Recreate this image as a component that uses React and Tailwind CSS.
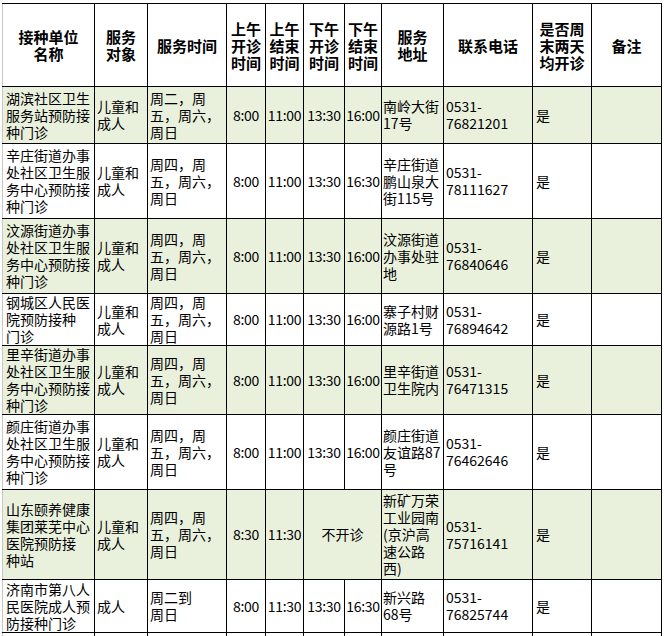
import React from 'react';

// 接种单位列表（绿色行 / 白色行交替）
const rows = [
  {
    h: 'h-[57px]', green: true,
    name: ['湖滨社区卫生', '服务站预防接', '种门诊'],
    who: ['儿童和', '成人'],
    days: ['周二，周', '五，周六，', '周日'],
    times: ['8:00', '11:00', '13:30', '16:00'],
    addr: ['南岭大街', '17号'],
    tel: '76821201',
  },
  {
    h: 'h-[75px]', green: false,
    name: ['辛庄街道办事', '处社区卫生服', '务中心预防接', '种门诊'],
    who: ['儿童和', '成人'],
    days: ['周四，周', '五，周六，', '周日'],
    times: ['8:00', '11:00', '13:30', '16:30'],
    addr: ['辛庄街道', '鹏山泉大', '街115号'],
    tel: '78111627',
  },
  {
    h: 'h-[75px]', green: true,
    name: ['汶源街道办事', '处社区卫生服', '务中心预防接', '种门诊'],
    who: ['儿童和', '成人'],
    days: ['周四，周', '五，周六，', '周日'],
    times: ['8:00', '11:00', '13:30', '16:00'],
    addr: ['汶源街道', '办事处驻', '地'],
    tel: '76840646',
  },
  {
    h: 'h-[52px]', green: false,
    name: ['钢城区人民医', '院预防接种', '门诊'],
    who: ['儿童和', '成人'],
    days: ['周四，周', '五，周六，', '周日'],
    times: ['8:00', '11:00', '13:30', '16:00'],
    addr: ['寨子村财', '源路1号'],
    tel: '76894642',
  },
  {
    h: 'h-[69px]', green: true,
    name: ['里辛街道办事', '处社区卫生服', '务中心预防接', '种门诊'],
    who: ['儿童和', '成人'],
    days: ['周四，周', '五，周六，', '周日'],
    times: ['8:00', '11:00', '13:30', '16:00'],
    addr: ['里辛街道', '卫生院内'],
    tel: '76471315',
  },
  {
    h: 'h-[75px]', green: false,
    name: ['颜庄街道办事', '处社区卫生服', '务中心预防接', '种门诊'],
    who: ['儿童和', '成人'],
    days: ['周四，周', '五，周六，', '周日'],
    times: ['8:00', '11:00', '13:30', '16:00'],
    addr: ['颜庄街道', '友谊路87', '号'],
    tel: '76462646',
  },
  {
    h: 'h-[90px]', green: true,
    name: ['山东颐养健康', '集团莱芜中心', '医院预防接', '种站'],
    who: ['儿童和', '成人'],
    days: ['周四，周', '五，周六，', '周日'],
    times: ['8:30', '11:30'],
    closed: '不开诊',
    addr: ['新矿万荣', '工业园南', '(京沪高', '速公路', '西)'],
    tel: '75716141',
  },
  {
    h: 'h-[53px]', green: false,
    name: ['济南市第八人', '民医院成人预', '防接种门诊'],
    who: ['成人'],
    days: ['周二到', '周日'],
    times: ['8:00', '11:30', '13:30', '16:30'],
    addr: ['新兴路', '68号'],
    tel: '76825744',
  },
];

const headers = [
  ['接种单位', '名称'],
  ['服务', '对象'],
  ['服务时间'],
  ['上午', '开诊', '时间'],
  ['上午', '结束', '时间'],
  ['下午', '开诊', '时间'],
  ['下午', '结束', '时间'],
  ['服务', '地址'],
  ['联系电话'],
  ['是否周', '末两天', '均开诊'],
  ['备注'],
];

const colW = ['w-[92px]', 'w-[53px]', 'w-[79px]', 'w-[39px]', 'w-[38px]', 'w-[41px]', 'w-[37px]', 'w-[62px]', 'w-[89px]', 'w-[59px]', 'w-[70px]'];

function Lines({ lines }) {
  return lines.map((l, i) => (
    <div key={i} className="whitespace-nowrap">{l}</div>
  ));
}

export default function App() {
  const cell = 'border border-black align-middle p-0';
  return (
    <div className="w-[664px] h-[636px] overflow-hidden bg-white pt-[3px] pl-[2px] font-['Noto_Sans_CJK_SC','Noto_Sans',sans-serif] text-black">
      <table className="table-fixed border-collapse w-[660px] text-[14px] leading-[17px]">
        <colgroup>
          {colW.map((w, i) => <col key={i} className={w} />)}
        </colgroup>
        <thead>
          <tr className="h-[83px]">
            {headers.map((h, i) => (
              <th
                key={i}
                className={`${cell} text-center font-bold text-[15px] leading-[17px] ${i === 0 ? 'border-l-[#c8c8c8]' : ''}`}
              >
                <Lines lines={h} />
              </th>
            ))}
          </tr>
        </thead>
        <tbody>
          {rows.map((r, ri) => (
            <tr key={ri} className={`${r.h} ${r.green ? 'bg-[#e9f1dd]' : 'bg-white'}`}>
              <td className={`${cell} pl-[3px] border-l-[#c8c8c8]`}><Lines lines={r.name} /></td>
              <td className={`${cell} pl-[2px]`}><Lines lines={r.who} /></td>
              <td className={`${cell} pl-[2px]`}><Lines lines={r.days} /></td>
              {r.times.map((t, ti) => (
                <td key={ti} className={`${cell} text-center tracking-[-0.3px]`}>{t}</td>
              ))}
              {r.closed && (
                <td colSpan={2} className={`${cell} text-center`}>{r.closed}</td>
              )}
              <td className={`${cell} pl-[1px]`}><Lines lines={r.addr} /></td>
              <td className={`${cell} pl-[2px]`}><Lines lines={['0531-', r.tel]} /></td>
              <td className={`${cell} pl-[3px]`}>是</td>
              <td className={cell}></td>
            </tr>
          ))}
          <tr className="h-[40px] bg-white">
            {colW.map((w, i) => (
              <td key={i} className={`${cell} ${i === 0 ? 'border-l-[#c8c8c8]' : ''}`}></td>
            ))}
          </tr>
        </tbody>
      </table>
    </div>
  );
}
